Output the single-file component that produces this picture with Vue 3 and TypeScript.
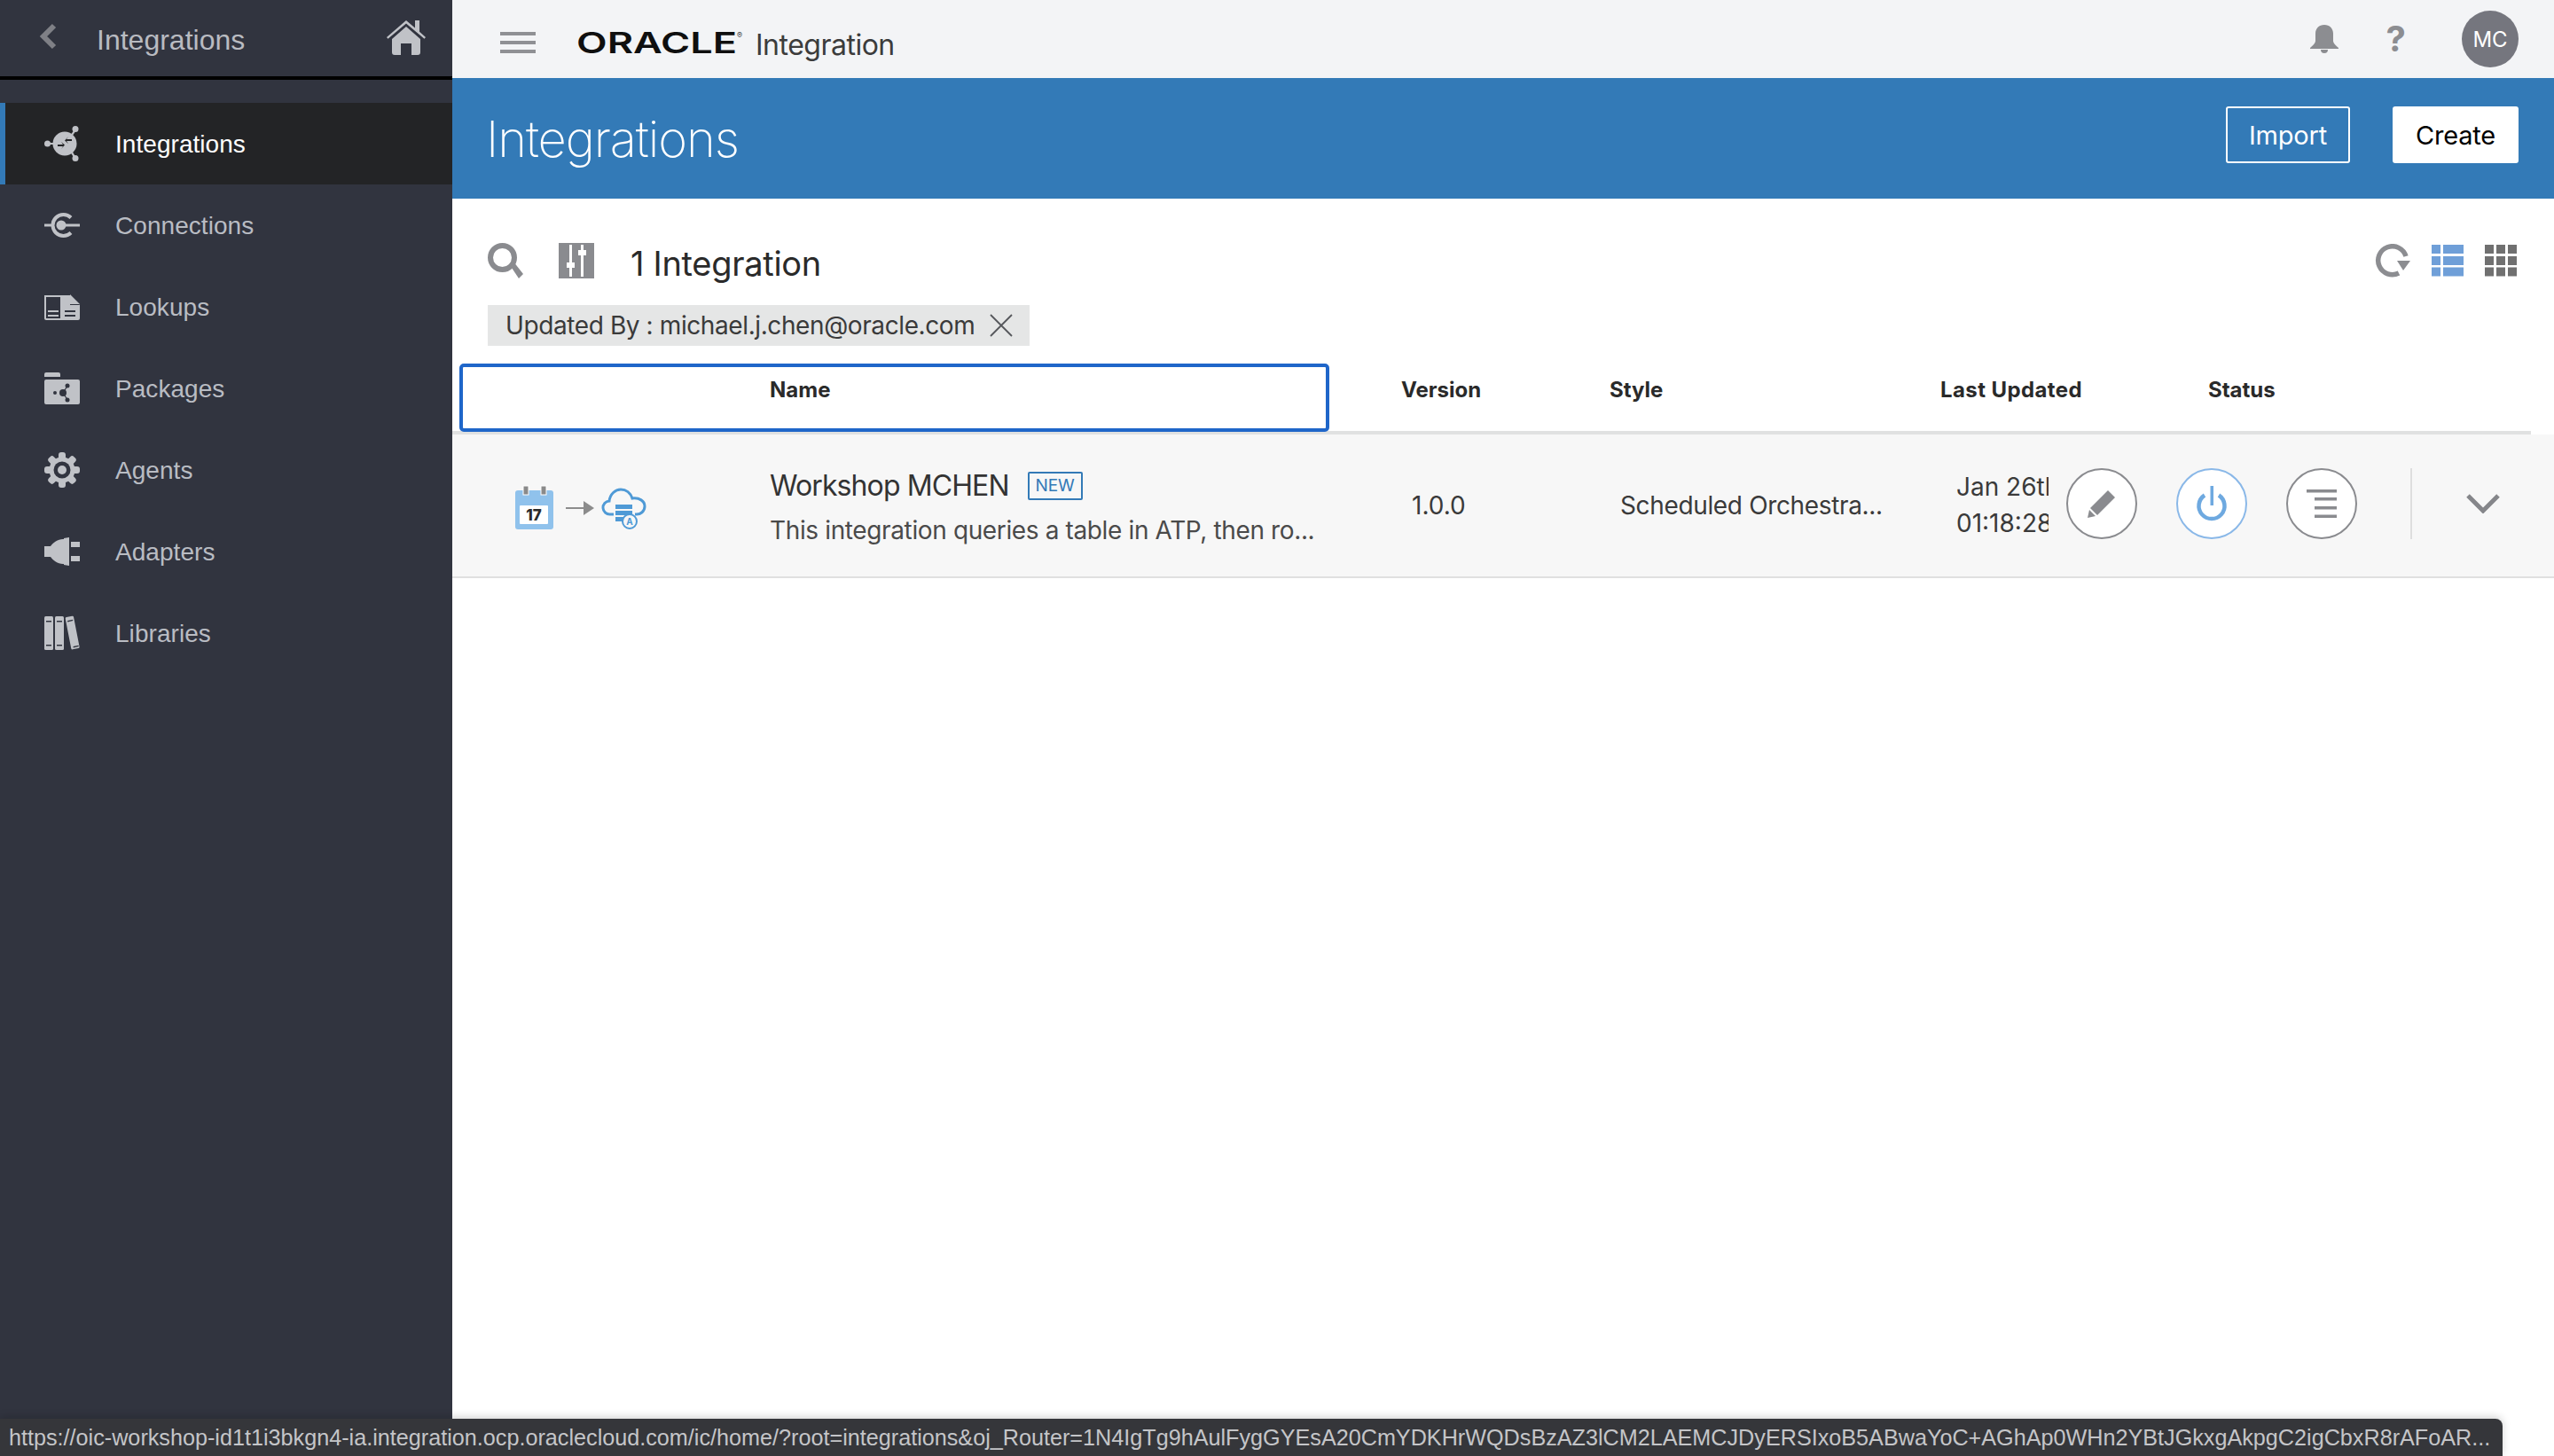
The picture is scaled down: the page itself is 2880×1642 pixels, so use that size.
<script setup lang="ts">
interface NavItem { label: string; icon: string; active?: boolean }
const nav: NavItem[] = [
  { label: 'Integrations', icon: 'integrations', active: true },
  { label: 'Connections', icon: 'connections' },
  { label: 'Lookups', icon: 'lookups' },
  { label: 'Packages', icon: 'packages' },
  { label: 'Agents', icon: 'agents' },
  { label: 'Adapters', icon: 'adapters' },
  { label: 'Libraries', icon: 'libraries' },
]
const teeth = [0, 45, 90, 135, 180, 225, 270, 315]
const url = 'https://oic-workshop-id1t1i3bkgn4-ia.integration.ocp.oraclecloud.com/ic/home/?root=integrations&oj_Router=1N4IgTg9hAulFygGYEsA20CmYDKHrWQDsBzAZ3lCM2LAEMCJDyERSIxoB5ABwaYoC+AGhAp0WHn2YBtJGkxgAkpgC2igCbxR8rAFoAR...'
</script>

<template>
  <div class="page">
    <aside class="sidebar">
      <header class="side-head">
        <svg class="back" width="20" height="30" viewBox="0 0 20 30"><path d="M17 3 5 15l12 12" fill="none" stroke="#7f8086" stroke-width="6"/></svg>
        <span class="side-title">Integrations</span>
        <svg class="home" width="44" height="40" viewBox="0 0 44 40"><path d="M0 20 22 1l10 8.600V1h5v12.800L44 20l-1.500 1.700L22 4.500 1.500 21.700z" fill="#c0c2c7"/><path d="M6 22 22 8l16 14v15a3 3 0 0 1-3 3h-7V27H16v13H9a3 3 0 0 1-3-3z" fill="#c0c2c7"/></svg>
      </header>
      <nav class="side-nav">
        <a v-for="item in nav" :key="item.label" class="nav-item" :class="{ active: item.active }">
          <svg class="nav-icon" width="40" height="40" viewBox="0 0 40 40">
            <g v-if="item.icon === 'integrations'" fill="#c0c2c7">
              <circle cx="23" cy="20" r="13.500"/><circle cx="3.500" cy="20" r="3.500"/><circle cx="35" cy="3.500" r="3.500"/><circle cx="35" cy="36.500" r="3.500"/>
              <path d="M3 19h8v2H3zM34 4l2 1-5 7-2-1zM29 29l2-1 5 8-2 1z"/>
              <path d="M15 21h6l-2-3 4 3.500-4 4.500 2-3h-6zM31 17h-6l2 3-4-3.500 4-4.500-2 3h6z" fill="#232426"/>
            </g>
            <g v-else-if="item.icon === 'connections'">
              <path d="M30 11.500A12 12 0 1 0 30 28.500" fill="none" stroke="#c0c2c7" stroke-width="4"/>
              <path d="M0 18.500h10v3H0zM20 18.500h20v3H20z" fill="#c0c2c7"/><circle cx="19" cy="20" r="5.500" fill="#c0c2c7"/>
            </g>
            <g v-else-if="item.icon === 'lookups'">
              <path d="M19 7h10l11 11v15a2 2 0 0 1-2 2H19z" fill="#c0c2c7"/><path d="M29 7v11h11z" fill="#31343f"/><path d="M29 6l11 11h-11z" fill="#c0c2c7"/>
              <path d="M23 24h12v2H23zM23 29h12v2H23z" fill="#31343f"/>
              <path d="M1 8h18v26H2a1 1 0 0 1-1-1z" fill="#31343f" stroke="#c0c2c7" stroke-width="2"/><path d="M4 24h12v2H4zM4 29h12v2H4z" fill="#c0c2c7"/>
            </g>
            <g v-else-if="item.icon === 'packages'">
              <path d="M0 4a2 2 0 0 1 2-2h14a2 2 0 0 1 2 2v3H0zM2 10h36a2 2 0 0 1 2 2v24a2 2 0 0 1-2 2H2a2 2 0 0 1-2-2V12a2 2 0 0 1 2-2z" fill="#c0c2c7"/>
              <g fill="#31343f"><circle cx="21" cy="25" r="4"/><circle cx="12" cy="25" r="2"/><circle cx="26" cy="17" r="2.500"/><circle cx="26" cy="33" r="2.500"/><path d="M21 24l4.500-7 1 .6-4.500 7zM21 26l4.500 7 1-.6-4.500-7z"/></g>
            </g>
            <g v-else-if="item.icon === 'agents'" fill="#c0c2c7">
              <rect v-for="a in teeth" :key="a" x="16" y="0" width="8" height="10" rx="3" :transform="`rotate(${a} 20 20)`"/>
              <circle cx="20" cy="20" r="14.500"/><circle cx="20" cy="20" r="9.500" fill="#31343f"/><circle cx="20" cy="20" r="5"/>
            </g>
            <g v-else-if="item.icon === 'adapters'" fill="#c0c2c7">
              <path d="M0 14h7c3-4 8-8 14-8h1v-1l6-1v32l-6-1v-1h-1c-6 0-11-4-14-8H0z"/><path d="M30 9h10v6H30zM30 25h10v6H30z"/>
            </g>
            <g v-else fill="#c0c2c7">
              <rect x="0" y="1" width="10" height="38" rx="1.500"/><rect x="12" y="1" width="10" height="38" rx="1.500"/>
              <rect x="27" y="1" width="9.500" height="37" rx="1.500" transform="rotate(-11 32 20)"/>
              <path d="M2 6h6v1.500H2zM14 6h6v1.500h-6zM2 33h6v1.500H2zM14 33h6v1.500h-6zM26 6l6-1.300.3 1.400-6 1.300zM32.500 35l6-1.300.3 1.400-6 1.300z" fill="#31343f"/>
            </g>
          </svg>
          <span class="nav-label">{{ item.label }}</span>
        </a>
      </nav>
    </aside>

    <main class="main">
      <header class="topbar">
        <div class="hamburger"><i></i><i></i><i></i></div>
        <svg class="oracle" width="195" height="32" viewBox="0 0 195 32">
          <text x="0" y="28" textLength="181" lengthAdjust="spacingAndGlyphs" class="oracle-text">ORACLE</text>
          <text x="181" y="11" class="oracle-r">®</text>
        </svg>
        <span class="product">Integration</span>
        <div class="top-right">
          <svg class="bell" width="32" height="32" viewBox="0 0 32 32"><path d="M16 0c6 0 10 4 10 10v8c0 3 3 5 6 8v1H0v-1c3-3 6-5 6-8v-8C6 4 10 0 16 0z" fill="#8c8d91"/><path d="M12 28h8a4 4 0 0 1-8 0z" fill="#8c8d91"/></svg>
          <span class="help">?</span>
          <span class="avatar">MC</span>
        </div>
      </header>

      <section class="banner">
        <h1>Integrations</h1>
        <div class="banner-actions">
          <button class="btn outline">Import</button>
          <button class="btn solid">Create</button>
        </div>
      </section>

      <section class="toolbar">
        <svg width="40" height="40" viewBox="0 0 40 40"><circle cx="16.500" cy="16.500" r="13.500" fill="none" stroke="#8a8b8f" stroke-width="6"/><path d="M25 25l4-4 11 14-5 5z" fill="#8a8b8f"/></svg>
        <svg class="filter" width="40" height="40" viewBox="0 0 40 40"><rect width="40" height="40" fill="#8a8b8f"/><path d="M12 2h3v20h3v6h-3v10h-3V28H9v-6h3zM25 2h3v6h3v6h-3v24h-3V14h-3V8h3z" fill="#fff"/></svg>
        <span class="count">1 Integration</span>
        <div class="tool-right">
          <svg width="40" height="38" viewBox="0 0 40 38"><path d="M27 33A16 16 0 1 1 35 14" fill="none" stroke="#8c8d91" stroke-width="5.500"/><path d="M25 19h15l-8 11z" fill="#8c8d91"/></svg>
          <svg width="36" height="36" viewBox="0 0 36 36" fill="#6f9fd8"><rect width="10" height="10"/><rect x="13" width="23" height="10"/><rect y="13" width="10" height="10"/><rect x="13" y="13" width="23" height="10"/><rect y="25.500" width="10" height="10"/><rect x="13" y="25.500" width="23" height="10"/></svg>
          <svg width="36" height="36" viewBox="0 0 36 36" fill="#707070"><rect width="10" height="10"/><rect x="13" width="10" height="10"/><rect x="26" width="10" height="10"/><rect y="13" width="10" height="10"/><rect x="13" y="13" width="10" height="10"/><rect x="26" y="13" width="10" height="10"/><rect y="25.500" width="10" height="10"/><rect x="13" y="25.500" width="10" height="10"/><rect x="26" y="25.500" width="10" height="10"/></svg>
        </div>
      </section>

      <div class="chip-row">
        <div class="chip">
          <span>Updated By : michael.j.chen@oracle.com</span>
          <svg width="26" height="26" viewBox="0 0 26 26"><path d="M1 1l24 24M25 1 1 25" stroke="#55575b" stroke-width="1.800"/></svg>
        </div>
      </div>

      <div class="table-head">
        <div class="focus-ring"></div>
        <span></span>
        <span>Name</span><span>Version</span><span>Style</span><span class="th-updated">Last Updated</span><span>Status</span>
      </div>

      <div class="table-row">
        <div class="cell-icons">
          <svg width="160" height="60" viewBox="0 0 160 60">
            <rect x="6" y="9" width="43" height="44" rx="3" fill="#90c2ec"/>
            <rect x="11" y="26" width="32" height="21" rx="1" fill="#fff"/>
            <rect x="15" y="4" width="6" height="10" fill="#8a8a8a" stroke="#fff" stroke-width="1"/><rect x="35" y="4" width="6" height="10" fill="#8a8a8a" stroke="#fff" stroke-width="1"/>
            <text x="27" y="43" class="cal-num">17</text>
            <path d="M63 28h21v2H63z" fill="#8c8c8c"/><path d="M83 21l12 8-12 8z" fill="#8c8c8c"/>
            <path d="M117 36h-4a7.500 7.500 0 0 1-1-15C113 13 119 8 125 8s11 4 13 10c8-1 14 3 14 9s-5 9-9 9h-2" fill="none" stroke="#4f9ad6" stroke-width="3"/>
            <g fill="#4f9ad6"><rect x="119" y="25" width="19" height="5"/><rect x="119" y="32" width="19" height="5"/><rect x="119" y="39" width="19" height="5"/></g>
            <circle cx="135" cy="44" r="8" fill="#f7f7f7" stroke="#4f9ad6" stroke-width="2"/>
            <text x="135" y="48" class="cal-a">A</text>
          </svg>
        </div>
        <div class="cell-name">
          <div class="name-line"><span class="name">Workshop MCHEN</span><span class="badge">NEW</span></div>
          <div class="desc">This integration queries a table in ATP, then ro...</div>
        </div>
        <div class="cell-version">1.0.0</div>
        <div class="cell-style">Scheduled Orchestra...</div>
        <div class="cell-date"><div>Jan 26th</div><div>01:18:28</div></div>
        <div class="cell-actions">
          <button class="round">
            <svg width="34" height="34" viewBox="0 0 34 34"><path d="M24 2l8 8L12 30 4 22z" fill="#8a8b8f"/><path d="M3 24l7 7-9 2z" fill="#8a8b8f"/></svg>
          </button>
          <button class="round on">
            <svg width="38" height="42" viewBox="0 0 38 42"><path d="M11 11.500a14.500 14.500 0 1 0 16 0" fill="none" stroke="#6ea9e0" stroke-width="4.500"/><path d="M17.500 1h3.500v22h-3.500z" fill="#6ea9e0"/></svg>
          </button>
          <button class="round">
            <svg width="34" height="34" viewBox="0 0 34 34" fill="#8a8b8f"><rect x="0" y="1" width="34" height="3.500"/><rect x="9" y="10" width="25" height="3.500"/><rect x="9" y="20" width="25" height="3.500"/><rect x="9" y="29.500" width="25" height="3.500"/></svg>
          </button>
          <span class="divider"></span>
          <svg class="chev" width="38" height="22" viewBox="0 0 38 22"><path d="M2 2l17 17L36 2" fill="none" stroke="#85868a" stroke-width="5"/></svg>
        </div>
      </div>
    </main>

    <div class="status">{{ url }}</div>
  </div>
</template>

<style>
html, body { margin: 0; background: #fff; }
</style>

<style scoped>
.page {
  position: relative;
  display: flex;
  width: 2880px;
  height: 1642px;
  overflow: hidden;
  font-family: Inter, "Liberation Sans", sans-serif;
}
.sidebar { width: 510px; flex: none; background: #31343f; font-family: "Liberation Sans", Arial, sans-serif; }
.side-head {
  height: 86px;
  display: flex;
  align-items: center;
  padding: 0 30px 0 44px;
  border-bottom: 4px solid #000;
}
.back { flex: none; margin-top: -4px; }
.side-title { margin-left: 45px; font-size: 32px; color: #b9bbc1; flex: 1; margin-top: 4px; }
.home { flex: none; margin-top: -2px; }
.side-nav { padding-top: 26px; display: flex; flex-direction: column; }
.nav-item {
  height: 92px;
  display: flex;
  align-items: center;
  padding-left: 50px;
  gap: 40px;
  font-size: 28px;
  color: #b9bcc3;
}
.nav-label { margin-top: 2px; letter-spacing: 0.05px; }
.nav-item.active { background: #232426; color: #fff; box-shadow: inset 6px 0 0 #337ab7; }
.nav-icon { flex: none; }

.main { flex: 1; min-width: 0; display: flex; flex-direction: column; }
.topbar { height: 88px; background: #f3f4f6; display: flex; align-items: center; padding-left: 54px; }
.hamburger { width: 40px; display: flex; flex-direction: column; gap: 6px; margin-top: 8px; }
.hamburger i { display: block; height: 4px; background: #8f9094; }
.oracle { margin-left: 46px; flex: none; margin-top: 8px; }
.oracle-text { font: 600 33px Inter, "Liberation Sans", sans-serif; fill: #0f0f0f; }
.oracle-r { font: 400 9px Inter, sans-serif; fill: #444; }
.product { margin-left: 7px; font-size: 32px; color: #3c3c3c; margin-top: 12px; letter-spacing: -0.5px; }
.top-right { margin-left: auto; display: flex; align-items: center; padding-right: 40px; }
.help { margin-left: 54px; font-size: 40px; font-weight: 700; color: #8c8d91; line-height: 1; }
.avatar {
  margin-left: 63px;
  width: 64px;
  height: 64px;
  border-radius: 50%;
  background: #75767e;
  color: #fff;
  font-size: 24px;
  display: flex;
  align-items: center;
  justify-content: center;
}
.banner { height: 136px; background: #337ab7; display: flex; align-items: center; padding: 0 40px 0 38px; }
.banner h1 { margin: 2px 0 0; font-size: 56px; font-weight: 200; color: #fff; flex: 1; letter-spacing: -1.1px; }
.banner-actions { display: flex; gap: 48px; margin-top: -8px; }
.btn {
  height: 64px;
  border-radius: 3px;
  font: 400 29px Inter, "Liberation Sans", sans-serif;
  box-sizing: border-box;
  letter-spacing: -0.2px;
}
.btn.outline { width: 140px; background: transparent; color: #fff; border: 2px solid #fff; }
.btn.solid { width: 142px; background: #fff; color: #000; border: 0; }

.toolbar { display: flex; align-items: center; height: 40px; padding: 50px 42px 0 40px; }
.filter { margin-left: 40px; }
.count { margin-left: 41px; font-size: 38px; color: #2a2a2a; margin-top: 5px; letter-spacing: -0.3px; }
.tool-right { margin-left: auto; display: flex; align-items: center; gap: 24px; }
.chip-row { padding: 30px 0 0 40px; display: flex; }
.chip {
  height: 46px;
  width: 611px;
  box-sizing: border-box;
  background: #e5e6e6;
  display: flex;
  align-items: center;
  padding: 0 19px 0 20px;
  justify-content: space-between;
  font-size: 28px;
  letter-spacing: -0.4px;
  color: #3a3a3a;
}
.table-head {
  position: relative;
  margin-top: 20px;
  margin-right: 26px;
  display: grid;
  grid-template-columns: 358px 712px 235px 372px 303px 1fr;
  align-items: start;
  padding-top: 15px;
  height: 61px;
  border-bottom: 4px solid #e0e1e1;
  font-size: 24px;
  font-weight: 700;
  color: #2a2a2a;
}
.th-updated { letter-spacing: 0.4px; margin-left: 1px; }
.focus-ring {
  position: absolute;
  left: 8px;
  top: 0;
  width: 981px;
  height: 77px;
  box-sizing: border-box;
  border: 4px solid #1f66c9;
  border-radius: 5px;
}
.table-row {
  height: 160px;
  background: #f7f7f7;
  border-bottom: 2px solid #e0e0e0;
  display: grid;
  grid-template-columns: 358px 712px 235px 372px 123px 1fr;
  align-items: center;
  color: #3a3a3a;
  font-size: 28px;
}
.cell-icons { padding-left: 65px; padding-top: 8px; height: 60px; }
.cell-name { padding-top: 3px; }
.name-line { display: flex; align-items: center; gap: 21px; }
.name { font-size: 32px; color: #333; letter-spacing: -0.9px; }
.badge {
  width: 62px;
  height: 32px;
  box-sizing: border-box;
  border: 2px solid #337ab7;
  border-radius: 2px;
  font-size: 19px;
  color: #337ab7;
  display: flex;
  align-items: center;
  justify-content: center;
}
.desc { margin-top: 14px; color: #4a4a4a; letter-spacing: -0.37px; }
.cell-version { padding-left: 12px; }
.cell-style { padding-left: 12px; letter-spacing: -0.35px; }
.cell-date { padding-left: 19px; overflow: hidden; white-space: nowrap; line-height: 41px; }
.cell-actions { display: flex; align-items: center; padding-left: 20px; height: 80px; margin-top: -4px; }
.round {
  width: 80px;
  height: 80px;
  flex: none;
  padding: 0;
  border-radius: 50%;
  background: #fff;
  border: 2px solid #8a8b8f;
  margin-right: 44px;
  display: flex;
  align-items: center;
  justify-content: center;
}
.round.on { border-color: #8ab8e8; }
.divider { width: 2px; height: 80px; background: #dedede; margin-left: 16px; flex: none; }
.chev { margin-left: 61px; flex: none; }
.cal-num { font: 800 17px Inter, sans-serif; text-anchor: middle; fill: #2a2a2a; }
.cal-a { font: 700 10px Inter, sans-serif; text-anchor: middle; fill: #4f9ad6; }

.status {
  position: absolute;
  left: 0;
  bottom: 0;
  width: 2822px;
  height: 42px;
  box-sizing: border-box;
  padding-left: 10px;
  line-height: 42px;
  background: #35363a;
  color: #c4c5c8;
  font-family: "Liberation Sans", Arial, sans-serif;
  font-size: 25.200px;
  white-space: nowrap;
  overflow: hidden;
  border-top-right-radius: 8px;
  box-shadow: 0 -2px 10px rgba(0, 0, 0, 0.18);
}
</style>
